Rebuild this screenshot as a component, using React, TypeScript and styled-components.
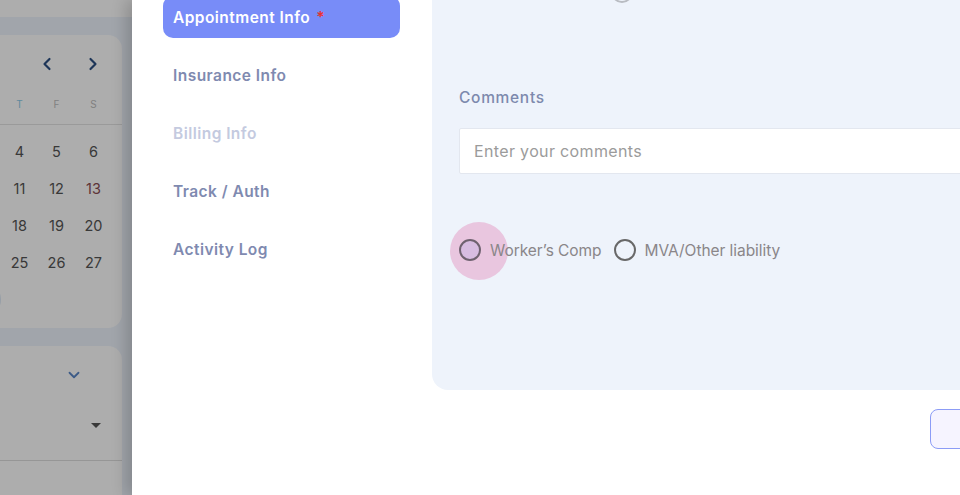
import styled, { createGlobalStyle } from "styled-components";
import { ChevronLeft, ChevronRight, ChevronDown } from "lucide-react";

const GlobalStyle = createGlobalStyle`
  *,
  *::before,
  *::after {
    box-sizing: border-box;
    padding: 0;
    margin: 0;
  }

  html, body {
    width: 100%;
    height: 100%;
    overflow: hidden;
  }

  body {
    font-family: Inter, "Noto Sans", "Liberation Sans", sans-serif;
    background: #edf3fd;
  }
`;

// only the last three columns of the month grid are in view
const weeks = [
  [0, 0, 0, 0, 4, 5, 6],
  [0, 0, 0, 0, 11, 12, 13],
  [0, 0, 0, 0, 18, 19, 20],
  [0, 0, 0, 0, 25, 26, 27],
  [0, 0, 0, 0, 0, 0, 0],
];

const weekdays = ["", "", "", "", "T", "F", "S"];

const navItems = [
  { label: "Appointment Info", active: true, required: true },
  { label: "Insurance Info" },
  { label: "Billing Info", disabled: true },
  { label: "Track / Auth" },
  { label: "Activity Log" },
];

function App() {
  return (
    <>
      <GlobalStyle />
      <Stage>
        <Backdrop>
          <TopBand />
          <CalendarCard>
            <MonthNav>
              <ChevronLeft size={20} strokeWidth={2.6} />
              <ChevronRight size={20} strokeWidth={2.6} />
            </MonthNav>
            <WeekdayRow>
              {weekdays.map((d, i) => (
                <Weekday key={i} $today={i === 4}>
                  {d}
                </Weekday>
              ))}
            </WeekdayRow>
            <DateGrid>
              {weeks.flat().map((d, i) => (
                <DateCell key={i} $holiday={d === 13} $selected={i === 31}>
                  {d > 0 ? d : ""}
                </DateCell>
              ))}
            </DateGrid>
          </CalendarCard>
          <FilterCard>
            <FilterHead>
              <ChevronDown size={18} strokeWidth={2.4} />
            </FilterHead>
            <SelectRow>
              <Caret />
            </SelectRow>
          </FilterCard>
        </Backdrop>
        <Overlay />
        <Drawer>
          <SideNav>
            {navItems.map((item) => (
              <NavItem
                key={item.label}
                $active={item.active}
                $disabled={item.disabled}
              >
                {item.label}
                {item.required && <Required>*</Required>}
              </NavItem>
            ))}
          </SideNav>
          <Main>
            <Panel>
              <PrevRow>
                <Radio />
              </PrevRow>
              <Label>Comments</Label>
              <CommentInput placeholder="Enter your comments" />
              <RadioGroup>
                <RadioOption>
                  <RadioWrap>
                    <Ripple />
                    <Radio $focused />
                  </RadioWrap>
                  <OptionText>Worker’s Comp</OptionText>
                </RadioOption>
                <RadioOption>
                  <RadioWrap>
                    <Radio $dark />
                  </RadioWrap>
                  <OptionText>MVA/Other liability</OptionText>
                </RadioOption>
              </RadioGroup>
            </Panel>
            <Footer>
              <OutlineButton aria-label="Cancel" />
            </Footer>
          </Main>
        </Drawer>
      </Stage>
    </>
  );
}

const Stage = styled.div`
  position: relative;
  width: 960px;
  height: 495px;
  overflow: hidden;
`;

const Backdrop = styled.div`
  width: 279px;
  margin-left: -157px;
  display: flex;
  flex-direction: column;
  gap: 18px;
`;

const TopBand = styled.div`
  height: 17px;
  background: #ffffff;
  margin-right: -20px;
`;

const CalendarCard = styled.div`
  height: 293px;
  background: #ffffff;
  border-radius: 14px;
`;

const MonthNav = styled.div`
  height: 58px;
  display: flex;
  justify-content: flex-end;
  align-items: center;
  gap: 26px;
  padding: 0 19px 0 0;
  color: #2c4f82;
`;

const WeekdayRow = styled.div`
  display: grid;
  grid-template-columns: repeat(7, 37px);
  padding: 0 10px;
  height: 32px;
  align-items: start;
  padding-top: 4px;
  border-bottom: 1px solid #e4e4e4;
`;

const Weekday = styled.span<{ $today?: boolean }>`
  text-align: center;
  font-size: 10px;
  line-height: 14px;
  color: ${(p) => (p.$today ? "#8ecbe8" : "#bdbdbd")};
`;

const DateGrid = styled.div`
  display: grid;
  grid-template-columns: repeat(7, 37px);
  grid-auto-rows: 37px;
  padding: 8px 10px 0;
`;

const DateCell = styled.span<{ $holiday?: boolean; $selected?: boolean }>`
  display: flex;
  align-items: center;
  justify-content: center;
  font-size: 14.5px;
  color: ${(p) => (p.$holiday ? "#8a4c52" : "#555555")};
  border-radius: 50%;
  background: ${(p) => (p.$selected ? "#dde9f6" : "transparent")};
`;

const FilterCard = styled.div`
  height: 200px;
  background: #ffffff;
  border-radius: 14px;
`;

const FilterHead = styled.div`
  height: 58px;
  display: flex;
  justify-content: flex-end;
  align-items: center;
  padding-right: 39px;
  color: #5a87c8;
`;

const SelectRow = styled.div`
  height: 57px;
  display: flex;
  justify-content: flex-end;
  align-items: center;
  padding-right: 21px;
  border-bottom: 1px solid #dedede;
`;

const Caret = styled.span`
  width: 0;
  height: 0;
  border-left: 5px solid transparent;
  border-right: 5px solid transparent;
  border-top: 5px solid #555555;
  margin-top: -14px;
`;

const Overlay = styled.div`
  position: absolute;
  inset: 0;
  background: rgba(0, 0, 0, 0.32);
`;

const Drawer = styled.div`
  position: absolute;
  top: 0;
  bottom: 0;
  left: 132px;
  width: 1000px;
  background: #ffffff;
  box-shadow: -6px 0 14px rgba(0, 0, 0, 0.18);
  display: flex;
  gap: 32px;
  padding-left: 31px;
`;

const SideNav = styled.nav`
  width: 237px;
  flex-shrink: 0;
  display: flex;
  flex-direction: column;
  gap: 16px;
  margin-top: -4px;
`;

const NavItem = styled.div<{ $active?: boolean; $disabled?: boolean }>`
  height: 42px;
  display: flex;
  align-items: center;
  padding-left: 10px;
  border-radius: 10px;
  font-size: 15.5px;
  font-weight: 600;
  letter-spacing: 0.45px;
  background: ${(p) => (p.$active ? "#788cf8" : "transparent")};
  color: ${(p) =>
    p.$active ? "#ffffff" : p.$disabled ? "#c4cadf" : "#7f8ab0"};
`;

const Required = styled.span`
  color: #e8322f;
  margin-left: 6px;
`;

const Main = styled.div`
  flex: 1;
  display: flex;
  flex-direction: column;
`;

const Panel = styled.section`
  margin-top: -30px;
  height: 420px;
  background: #eef3fb;
  border-bottom-left-radius: 16px;
  padding: 11px 27px 0;
  display: flex;
  flex-direction: column;
`;

const PrevRow = styled.div`
  display: flex;
  padding-left: 152px;
`;

const Label = styled.label`
  margin-top: 85px;
  font-size: 15.5px;
  line-height: 20px;
  font-weight: 500;
  letter-spacing: 0.7px;
  color: #7d89ad;
`;

const CommentInput = styled.input`
  margin-top: 20px;
  height: 46px;
  width: 100%;
  border: 1px solid #e3e7ef;
  border-radius: 2px;
  background: #ffffff;
  padding: 0 14px;
  font-family: inherit;
  font-size: 16px;
  letter-spacing: 0.35px;
  outline: none;

  &::placeholder {
    color: #9b9b9b;
  }
`;

const RadioGroup = styled.div`
  margin-top: 65px;
  display: flex;
  align-items: center;
  gap: 12px;
`;

const RadioOption = styled.div`
  display: flex;
  align-items: center;
  gap: 9px;
`;

const OptionText = styled.span`
  position: relative;
  font-size: 15.5px;
  letter-spacing: -0.05px;
  color: #8a8689;
`;

const RadioWrap = styled.span`
  position: relative;
  display: flex;
`;

const Ripple = styled.span`
  position: absolute;
  width: 58px;
  height: 58px;
  left: -9px;
  top: -17px;
  border-radius: 50%;
  background: #e9c6df;
`;

const Radio = styled.span<{ $focused?: boolean; $dark?: boolean }>`
  position: relative;
  width: 22px;
  height: 22px;
  border-radius: 50%;
  border: 2px solid
    ${(p) => (p.$focused ? "#6f6270" : p.$dark ? "#686868" : "#b9bcc2")};
  background: ${(p) => (p.$focused ? "#d8bde2" : "transparent")};
`;

const Footer = styled.div`
  padding: 19px 0 0 498px;
  display: flex;
`;

const OutlineButton = styled.button`
  height: 40px;
  width: 130px;
  border: 1.5px solid #8c9cf6;
  border-radius: 8px;
  background: #f6f4ff;
`;

export default App;
